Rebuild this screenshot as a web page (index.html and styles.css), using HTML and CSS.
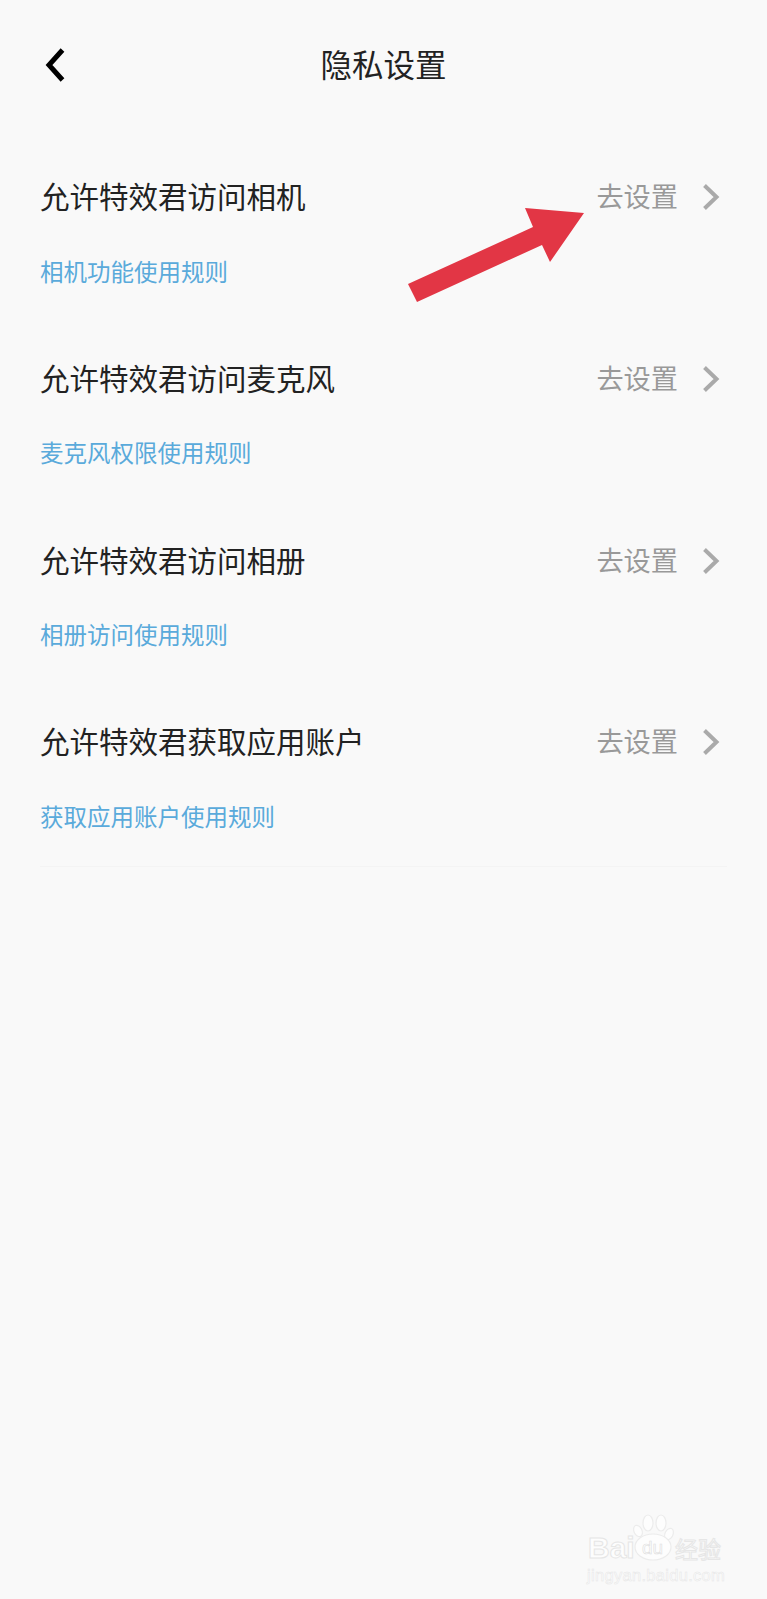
FILE: index.html
```html
<!DOCTYPE html>
<html lang="zh-CN">

<head>
    <meta charset="UTF-8">
    <meta name="viewport" content="width=device-width, initial-scale=1.0">
    <title>隐私设置</title>
    <link rel="stylesheet" href="styles.css">
</head>

<body>
    <div class="page">
        <header class="topBar">
            <a href="#" class="back" aria-label="返回">
                <svg width="24" height="36" viewBox="0 0 24 36">
                    <path d="M18.5 3 L5 18 L18.5 33" fill="none" stroke="#000" stroke-width="5" />
                </svg>
            </a>
            <h1 class="title">隐私设置</h1>
        </header>

        <ul class="list">
            <li class="item">
                <div class="itemHead">
                    <span class="itemName">允许特效君访问相机</span>
                    <a href="#" class="go">去设置
                        <svg width="20" height="28" viewBox="0 0 20 28">
                            <path d="M3.5 2.5 L15.5 14 L3.5 25.5" fill="none" stroke="#aaa" stroke-width="4" />
                        </svg>
                    </a>
                </div>
                <a href="#" class="rule">相机功能使用规则</a>
            </li>
            <li class="item">
                <div class="itemHead">
                    <span class="itemName">允许特效君访问麦克风</span>
                    <a href="#" class="go">去设置
                        <svg width="20" height="28" viewBox="0 0 20 28">
                            <path d="M3.5 2.5 L15.5 14 L3.5 25.5" fill="none" stroke="#aaa" stroke-width="4" />
                        </svg>
                    </a>
                </div>
                <a href="#" class="rule">麦克风权限使用规则</a>
            </li>
            <li class="item">
                <div class="itemHead">
                    <span class="itemName">允许特效君访问相册</span>
                    <a href="#" class="go">去设置
                        <svg width="20" height="28" viewBox="0 0 20 28">
                            <path d="M3.5 2.5 L15.5 14 L3.5 25.5" fill="none" stroke="#aaa" stroke-width="4" />
                        </svg>
                    </a>
                </div>
                <a href="#" class="rule">相册访问使用规则</a>
            </li>
            <li class="item">
                <div class="itemHead">
                    <span class="itemName">允许特效君获取应用账户</span>
                    <a href="#" class="go">去设置
                        <svg width="20" height="28" viewBox="0 0 20 28">
                            <path d="M3.5 2.5 L15.5 14 L3.5 25.5" fill="none" stroke="#aaa" stroke-width="4" />
                        </svg>
                    </a>
                </div>
                <a href="#" class="rule">获取应用账户使用规则</a>
            </li>
        </ul>
        <div class="line"></div>

        <!-- 빨간 화살표 -->
        <svg class="arrow" width="190" height="100" viewBox="0 0 190 100">
            <polygon points="8,76 17,94 142,37 150,54 184,5 125,0 133,19" fill="#e23645" />
        </svg>

        <!-- 워터마크 -->
        <div class="mark">
            <svg class="paw" width="50" height="50" viewBox="0 0 50 50">
                <g fill="#fdfdfd" stroke="#ececec" stroke-width="1.2">
                    <ellipse cx="10" cy="19" rx="4" ry="6" transform="rotate(-25 10 19)" />
                    <ellipse cx="20" cy="11" rx="5" ry="8" />
                    <ellipse cx="33" cy="11" rx="5" ry="8" />
                    <ellipse cx="41" cy="22" rx="4" ry="6" transform="rotate(25 41 22)" />
                    <ellipse cx="25" cy="35" rx="18" ry="13" />
                </g>
            </svg>
            <span class="markBai">Bai</span>
            <span class="markDu">du</span>
            <span class="markJy">经验</span>
            <span class="markUrl">jingyan.baidu.com</span>
        </div>
    </div>
</body>

</html>
```

FILE: styles.css
```css
/* 초기화 */
* {
    box-sizing: border-box;
}

body {
    margin: 0;
    background: #f9f9f9;
    font-family: "Noto Sans CJK SC", "Noto Sans", sans-serif;
}

ul {
    list-style: none;
    padding: 0;
    margin: 0;
}

a {
    text-decoration: none;
}

.page {
    position: relative;
    width: 767px;
    height: 1599px;
    overflow: hidden;
}

/* 상단 */
.topBar {
    position: relative;
    display: flex;
    align-items: center;
    justify-content: center;
    height: 125px;
}

.back {
    position: absolute;
    left: 44px;
    top: 47px;
    display: flex;
}

.title {
    margin: 0;
    font-size: 31.5px;
    font-weight: 400;
    color: #222;
}

/* 목록 */
.list {
    display: flex;
    flex-direction: column;
    gap: 69.8px;
    padding: 48px 46px 0 40px;
}

.item {
    height: 112px;
}

.itemHead {
    display: flex;
    align-items: center;
    justify-content: space-between;
    height: 44px;
}

.itemName {
    font-size: 29.5px;
    color: #222;
}

.go {
    display: flex;
    align-items: center;
    gap: 23px;
    font-size: 27.2px;
    color: #999;
}

.go svg {
    margin-top: 4px;
}

.rule {
    display: block;
    margin-top: 38.5px;
    font-size: 23.5px;
    line-height: 30px;
    color: #5aaadb;
}

.line {
    height: 1px;
    margin: 36px 40px 0;
    background: #f4f4f4;
}

.arrow {
    position: absolute;
    left: 400px;
    top: 208px;
}

/* 워터마크 */
.mark {
    position: absolute;
    left: 586px;
    top: 1512px;
    width: 140px;
    height: 72px;
    color: #fdfdfd;
    font-family: "Liberation Sans", sans-serif;
    -webkit-text-stroke: 1px #e6e6e6;
}

.paw {
    position: absolute;
    left: 42px;
    top: 0;
}

.markBai {
    position: absolute;
    left: 2px;
    top: 18px;
    font-size: 30px;
    font-weight: 700;
    line-height: 36px;
}

.markDu {
    position: absolute;
    left: 56px;
    top: 23px;
    font-size: 19px;
    line-height: 26px;
    -webkit-text-stroke: 0.6px #dedede;
}

.markJy {
    position: absolute;
    left: 89px;
    top: 21px;
    font-family: "Noto Sans CJK SC", sans-serif;
    font-size: 23px;
    line-height: 30px;
    white-space: nowrap;
}

.markUrl {
    position: absolute;
    left: 1px;
    top: 54px;
    font-size: 16.5px;
    line-height: 18px;
    letter-spacing: 0.3px;
    -webkit-text-stroke: 0.5px #e6e6e6;
    white-space: nowrap;
}
```
